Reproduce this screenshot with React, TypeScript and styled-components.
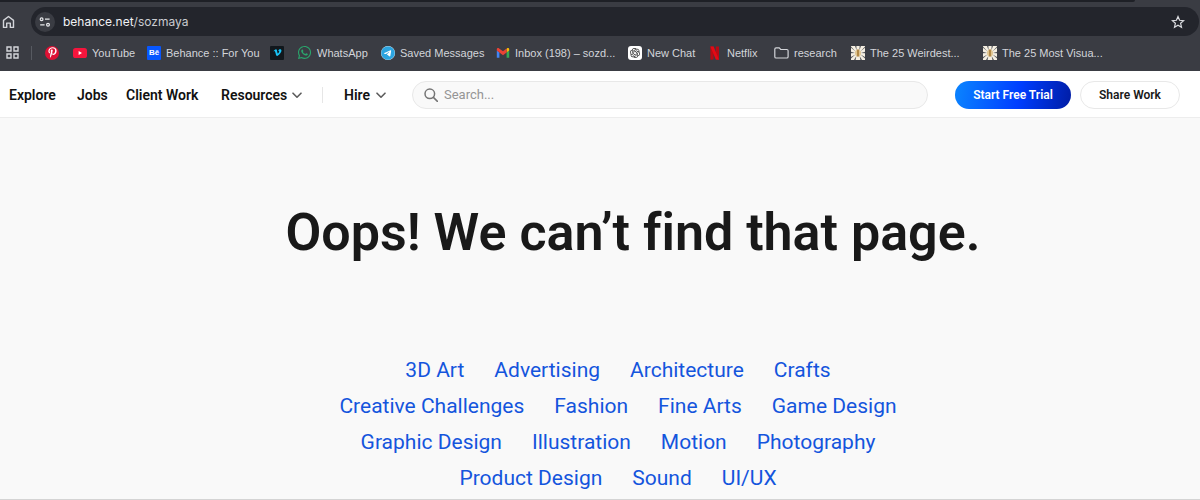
import React from "react";
import styled, { createGlobalStyle } from "styled-components";
import { FaPinterestP, FaTelegram, FaVimeoV, FaWhatsapp } from "react-icons/fa6";
import { RiOpenaiFill } from "react-icons/ri";

const GlobalStyle = createGlobalStyle`
  * { box-sizing: border-box; }
  body {
    margin: 0;
    background: #f9f9f9;
    color: #191919;
    font-family: Roboto, "Liberation Sans", sans-serif;
  }
  button, input { font: inherit; }
  a { color: inherit; text-decoration: none; }
`;

const Page = styled.div`
  display: flex;
  flex-direction: column;
  min-height: 100vh;
  overflow-x: hidden;
  border-bottom: 1px solid #d4d4d4;
`;

const Browser = styled.header`
  background: #3a3c43;
  color: #d3d5da;
  font-family: Inter, "Liberation Sans", sans-serif;
`;

const TabStrip = styled.div`
  height: 2px;
  margin-right: 65px;
  background: #1e2026;
  border-bottom-right-radius: 4px;
`;

const AddressRow = styled.div`
  display: flex;
  align-items: center;
  gap: 16px;
  padding: 5px 1px 0 2px;
`;

const ToolButton = styled.button`
  display: grid;
  place-items: center;
  flex: none;
  padding: 0;
  border: 0;
  background: none;
  color: inherit;
`;

const AddressBar = styled.form`
  display: flex;
  align-items: center;
  flex: 1;
  height: 29px;
  padding: 0 14px 0 4px;
  border-radius: 15px;
  background: #23252c;
`;

const SiteInfo = styled(ToolButton)`
  width: 20px;
  height: 20px;
  border-radius: 50%;
  background: #3a3c43;
`;

const Address = styled.div`
  flex: 1;
  padding-left: 8px;
  font-size: 12px;
  line-height: 20px;
  color: #c9cbd0;
`;

const Domain = styled.span`
  color: #f1f2f4;
`;

const BookmarkBar = styled.nav`
  display: flex;
  align-items: center;
  height: 35px;
  padding: 0 6px 2px;
  font-family: "Liberation Sans", Arial, sans-serif;
`;

const BarDivider = styled.span`
  width: 1px;
  height: 14px;
  margin: 0 13px 0 12px;
  background: #575a61;
`;

const Bookmark = styled.a<{ $width: number }>`
  display: flex;
  align-items: center;
  flex: none;
  gap: 5px;
  width: ${(p) => p.$width}px;
  font-size: 11px;
  line-height: 16px;
  white-space: nowrap;

  svg { flex: none; }
`;

const Tile = styled.span<{ $bg: string; $fg: string; $radius?: number }>`
  display: grid;
  place-items: center;
  flex: none;
  width: 14px;
  height: 14px;
  border-radius: ${(p) => p.$radius ?? 1}px;
  background: ${(p) => p.$bg};
  color: ${(p) => p.$fg};
  font-size: 8px;
  font-weight: 700;
  line-height: 14px;
`;

const SiteNav = styled.nav`
  display: flex;
  align-items: center;
  height: 47px;
  padding: 2px 20px 0 9px;
  border-bottom: 1px solid #ededed;
  background: #fff;
  font-size: 14px;
  line-height: 20px;
  font-weight: 600;
  color: #111;
`;

const NavItem = styled.a<{ $width: number }>`
  display: flex;
  align-items: center;
  justify-content: space-between;
  flex: none;
  width: ${(p) => p.$width}px;
  margin-right: 20px;
  white-space: nowrap;
`;

const NavDivider = styled.span`
  width: 1px;
  height: 16px;
  margin-right: 21px;
  background: #e6e6e6;
`;

const Search = styled.label`
  display: flex;
  align-items: center;
  flex: 1;
  gap: 6px;
  height: 28px;
  margin: 0 27px 0 6px;
  padding: 0 11px;
  border: 1px solid #e8e8e8;
  border-radius: 14px;
  background: #f9f9f9;
`;

const SearchInput = styled.input`
  flex: 1;
  min-width: 0;
  padding: 0;
  border: 0;
  outline: 0;
  background: none;
  font-size: 13px;
  font-weight: 400;
  &::placeholder { color: #959595; opacity: 1; }
`;

const PillButton = styled.button<{ $primary?: boolean }>`
  flex: none;
  width: ${(p) => (p.$primary ? 116 : 100)}px;
  height: 28px;
  padding: 0;
  margin-left: ${(p) => (p.$primary ? 0 : 9)}px;
  border: ${(p) => (p.$primary ? "0" : "1px solid #e8e8e8")};
  border-radius: 14px;
  background: ${(p) =>
    p.$primary ? "linear-gradient(100deg, #0a80ff 4%, #003eff 55%, #001ea8 98%)" : "#fff"};
  color: ${(p) => (p.$primary ? "#fff" : "#191919")};
  font-size: 12px;
  font-weight: 600;
`;

const Main = styled.main`
  display: flex;
  flex-direction: column;
  align-items: center;
  flex: 1;
  padding-left: 66px;
`;

const Title = styled.h1`
  margin: 83px 0 87px;
  font-size: 52px;
  line-height: 64px;
  font-weight: 600;
  font-variant-ligatures: none;
`;

const Fields = styled.div`
  display: flex;
  flex-wrap: wrap;
  justify-content: center;
  width: 100%;
  max-width: 620px;
`;

const FieldLink = styled.a`
  margin-right: 30px;
  color: #1455dd;
  font-size: 21px;
  line-height: 36px;
`;

const HomeIcon = () => (
  <svg width="13" height="14" viewBox="0 0 13 14" fill="none" stroke="currentColor" strokeWidth="1.4">
    <path d="M1.5 5.4 6.5 1.5l5 3.9v7H8.3V8.1H4.7v4.3H1.5z" strokeLinejoin="round" />
  </svg>
);

const TuneIcon = () => (
  <svg width="12" height="12" viewBox="0 0 12 12" fill="none" stroke="#e8e9ec" strokeWidth="1.2">
    <circle cx="2.6" cy="3.2" r="1.4" />
    <path d="M6 3.2h4.6M1.2 8.8h4.4" />
    <circle cx="9" cy="8.8" r="1.4" />
  </svg>
);

const StarIcon = () => (
  <svg width="14" height="14" viewBox="0 0 14 14" fill="none" stroke="#dcdde1" strokeWidth="1.2">
    <path d="m7 1.6 1.6 3.7 4 .4-3 2.6.9 3.9L7 10.2l-3.5 2 .9-3.9-3-2.6 4-.4z" />
  </svg>
);

const AppsIcon = () => (
  <svg width="13" height="13" viewBox="0 0 13 13" fill="none" stroke="currentColor" strokeWidth="1.4">
    <path d="M1 1h4v4H1zM8 1h4v4H8zM1 8h4v4H1zM8 8h4v4H8z" />
  </svg>
);

const YouTubeIcon = () => (
  <svg width="14" height="14" viewBox="0 0 14 14">
    <rect y="2" width="14" height="10" rx="2.6" fill="#f5153d" />
    <path d="M5.6 5v4l3.4-2z" fill="#fff" />
  </svg>
);

const GmailIcon = () => (
  <svg width="14" height="14" viewBox="0 0 14 14">
    <path d="M.8 4.5v7.2h2.6V6.5z" fill="#4285f4" />
    <path d="M13.2 4.5v7.2h-2.6V6.5z" fill="#34a853" />
    <path d="M10.6 3.2v3.4l2.6-2V3.4c0-1.3-1.5-1.6-2.3-1z" fill="#fbbc04" />
    <path d="M.8 4.6V3.4c0-1.3 1.4-1.6 2.3-1L7 5.3l3.6-2.8v4.1L7 9.3 3.4 6.6z" fill="#ea4335" />
  </svg>
);

const NetflixIcon = () => (
  <svg width="14" height="14" viewBox="0 0 14 14">
    <path d="M2.4.5h3.2v13l-3.2.3zM7.8.5H11v13.3l-3.2-.3z" fill="#b80a14" />
    <path d="M2.4.5h3.2L11 13.8l-3.2-.3z" fill="#e50914" />
  </svg>
);

const FolderIcon = () => (
  <svg width="15" height="12" viewBox="0 0 15 12" fill="none" stroke="currentColor" strokeWidth="1.2">
    <path d="M.8 2.2c0-.8.5-1.3 1.3-1.3h3.1l1.5 1.6h6.1c.8 0 1.3.5 1.3 1.3v5.9c0 .8-.5 1.3-1.3 1.3H2.1c-.8 0-1.3-.5-1.3-1.3z" />
  </svg>
);

const SunburstIcon = () => (
  <svg width="14" height="14" viewBox="0 0 14 14">
    <rect width="14" height="14" fill="#f5efe2" />
    <path
      d="M5.6 4.5 4 0h1.4zM4.6 5.4 0 1.8V.4zM4 7 0 5.8v1.4zM4.4 8.6 0 11v1.6zM5.4 10 3 14h1.6zM8.4 4.5 8.6 0H10zM9.4 5.4 14 1.8V.4zM10 7l4-1.2v1.4zM9.6 8.6 14 11v1.6zM8.6 10 9.4 14H11z"
      fill="#55575a"
    />
    <ellipse cx="7" cy="7" rx="3" ry="3.6" fill="#dfc591" />
    <path d="M6.2 3.5h1.6v7H6.2z" fill="#a77b35" />
  </svg>
);

const Chevron = () => (
  <svg width="10" height="7" viewBox="0 0 10 7" fill="none" stroke="#5c5c5c" strokeWidth="1.6">
    <path d="m1 1.2 4 4 4-4" strokeLinecap="round" strokeLinejoin="round" />
  </svg>
);

const SearchIcon = () => (
  <svg width="14" height="14" viewBox="0 0 14 14" fill="none" stroke="#757575" strokeWidth="1.5">
    <circle cx="5.8" cy="5.8" r="4.8" />
    <path d="m9.4 9.4 4 4" strokeLinecap="round" />
  </svg>
);

const bookmarks: { name: string; label?: string; width: number; icon: React.ReactNode }[] = [
  { name: "Pinterest", width: 28, icon: <Tile $bg="#dd1134" $fg="#fff" $radius={7}><FaPinterestP size={11} /></Tile> },
  { name: "YouTube", label: "YouTube", width: 74, icon: <YouTubeIcon /> },
  { name: "Behance", label: "Behance :: For You", width: 123, icon: <Tile $bg="#0757ff" $fg="#fff">Bē</Tile> },
  { name: "Vimeo", width: 27, icon: <Tile $bg="#11171c" $fg="#18c3f5"><FaVimeoV size={9} /></Tile> },
  { name: "WhatsApp", label: "WhatsApp", width: 84, icon: <FaWhatsapp size={15} color="#2aa56c" /> },
  { name: "Telegram", label: "Saved Messages", width: 115, icon: <Tile $bg="#fff" $fg="#2ca4df" $radius={7}><FaTelegram size={14} /></Tile> },
  { name: "Gmail", label: "Inbox (198) – sozd...", width: 132, icon: <GmailIcon /> },
  { name: "ChatGPT", label: "New Chat", width: 80, icon: <Tile $bg="#fff" $fg="#222" $radius={3}><RiOpenaiFill size={12} /></Tile> },
  { name: "Netflix", label: "Netflix", width: 66, icon: <NetflixIcon /> },
  { name: "Research folder", label: "research", width: 77, icon: <FolderIcon /> },
  { name: "Weirdest", label: "The 25 Weirdest...", width: 132, icon: <SunburstIcon /> },
  { name: "Visual", label: "The 25 Most Visua...", width: 132, icon: <SunburstIcon /> },
];

const fields = [
  "3D Art", "Advertising", "Architecture", "Crafts",
  "Creative Challenges", "Fashion", "Fine Arts", "Game Design",
  "Graphic Design", "Illustration", "Motion", "Photography",
  "Product Design", "Sound", "UI/UX",
];

export default function App() {
  return (
    <Page>
      <GlobalStyle />
      <Browser>
        <TabStrip />
        <AddressRow>
          <ToolButton aria-label="Home"><HomeIcon /></ToolButton>
          <AddressBar onSubmit={(e) => e.preventDefault()}>
            <SiteInfo type="button" aria-label="Site information"><TuneIcon /></SiteInfo>
            <Address><Domain>behance.net</Domain>/sozmaya</Address>
            <ToolButton type="button" aria-label="Bookmark this page"><StarIcon /></ToolButton>
          </AddressBar>
        </AddressRow>
        <BookmarkBar aria-label="Bookmarks">
          <ToolButton aria-label="Apps"><AppsIcon /></ToolButton>
          <BarDivider />
          {bookmarks.map((b) => (
            <Bookmark key={b.name} href="#" aria-label={b.name} $width={b.width}>
              {b.icon}
              {b.label}
            </Bookmark>
          ))}
        </BookmarkBar>
      </Browser>
      <SiteNav aria-label="Main">
        <NavItem href="#" $width={48}>Explore</NavItem>
        <NavItem href="#" $width={29}>Jobs</NavItem>
        <NavItem href="#" $width={75}>Client Work</NavItem>
        <NavItem href="#" $width={81}>Resources <Chevron /></NavItem>
        <NavDivider />
        <NavItem href="#" $width={42}>Hire <Chevron /></NavItem>
        <Search>
          <SearchIcon />
          <SearchInput type="search" placeholder="Search..." aria-label="Search" />
        </Search>
        <PillButton $primary>Start Free Trial</PillButton>
        <PillButton>Share Work</PillButton>
      </SiteNav>
      <Main>
        <Title>Oops! We can’t find that page.</Title>
        <Fields>
          {fields.map((f) => (
            <FieldLink key={f} href="#">{f}</FieldLink>
          ))}
        </Fields>
      </Main>
    </Page>
  );
}
